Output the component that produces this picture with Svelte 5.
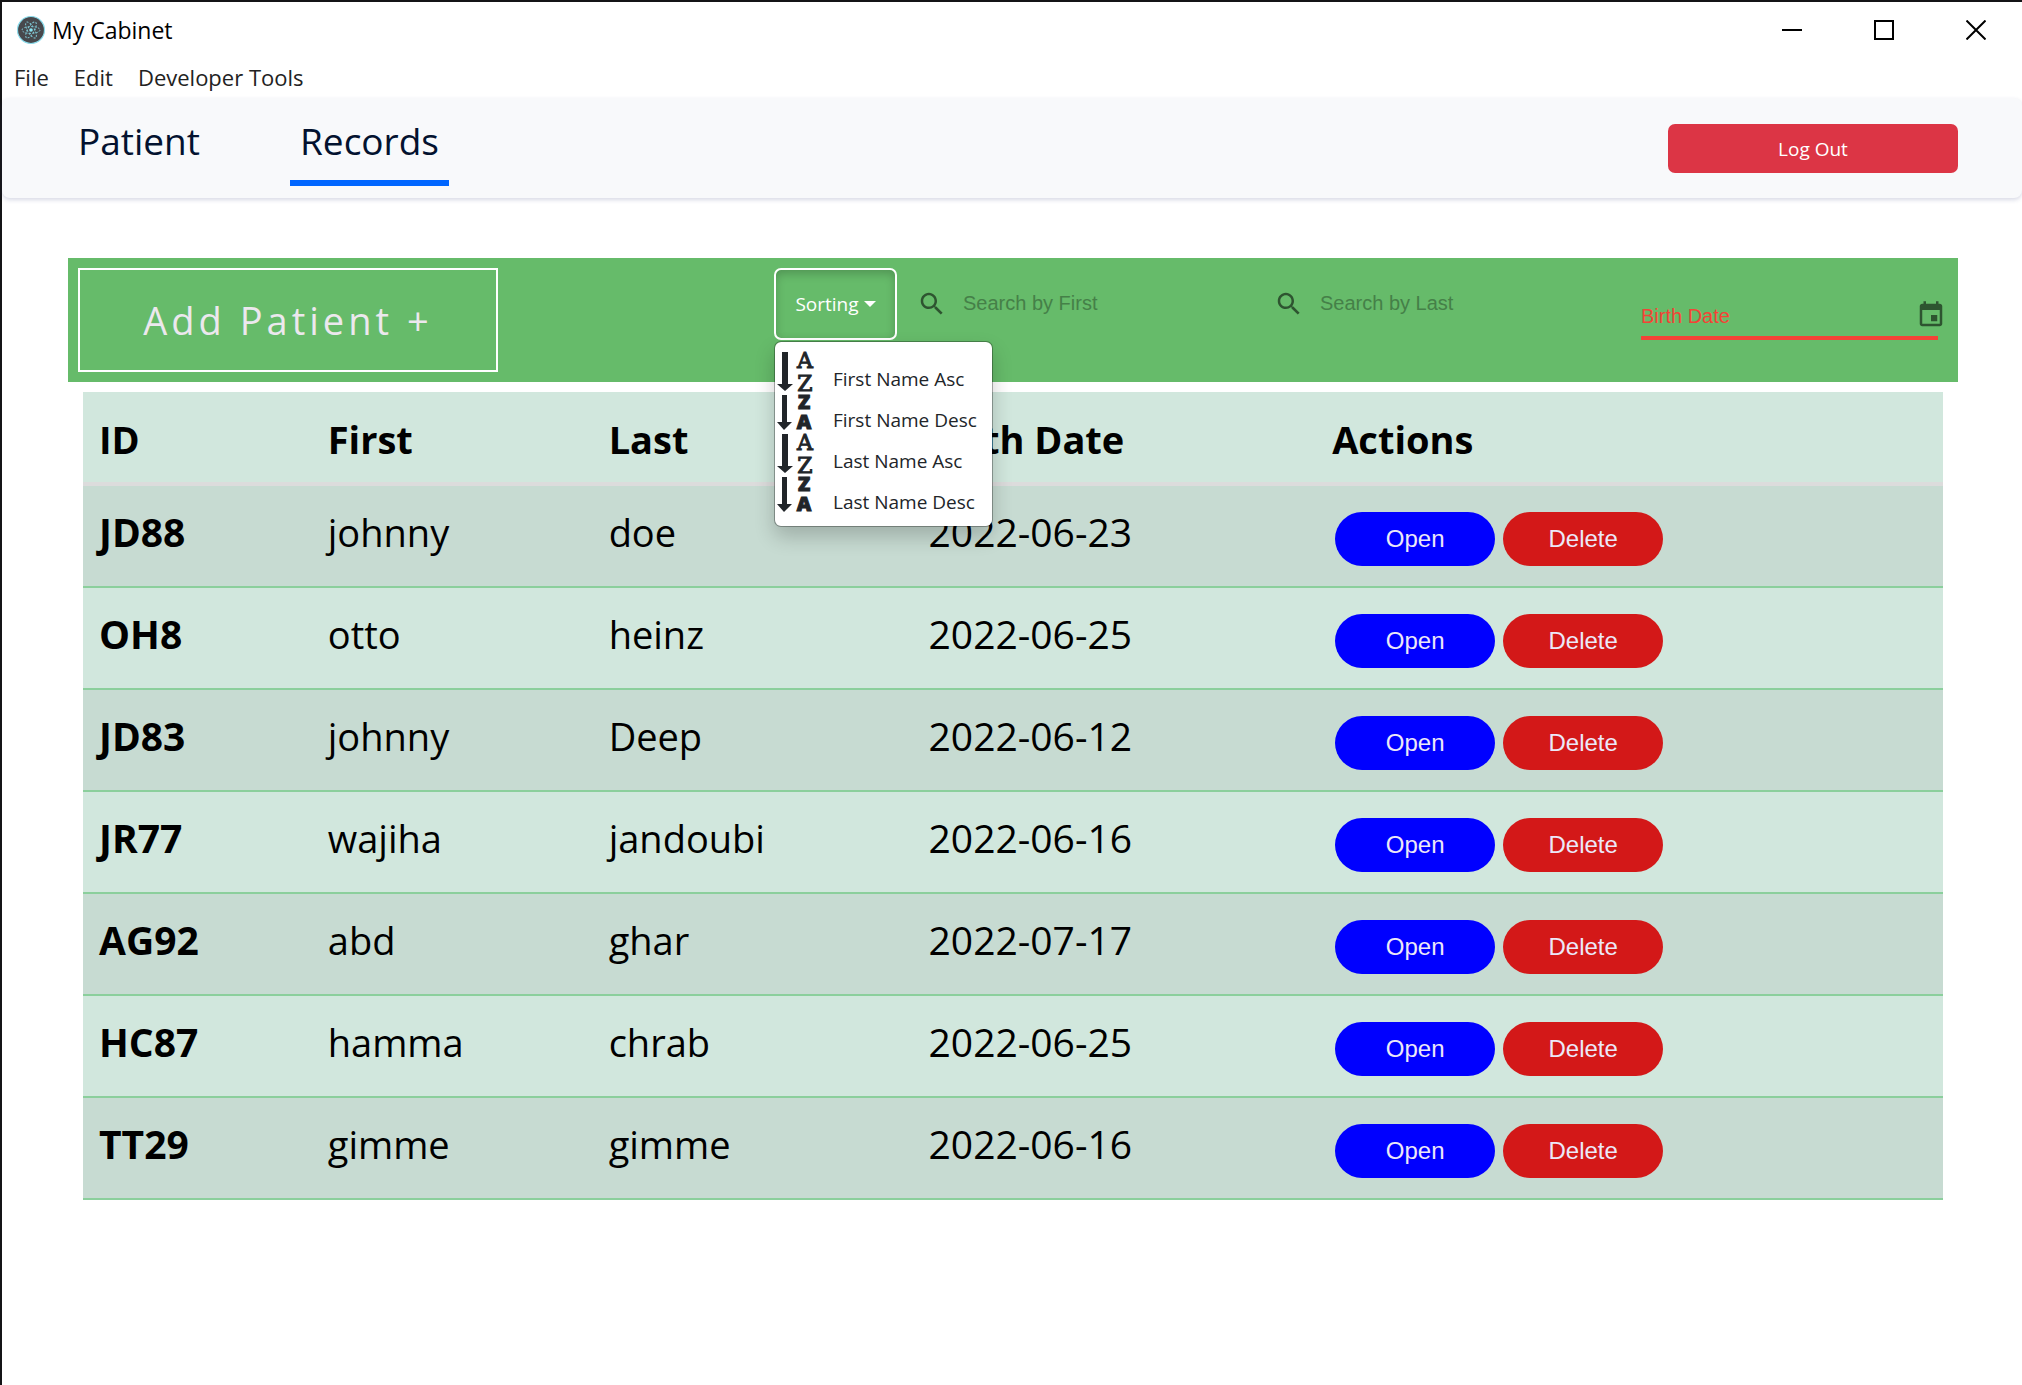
<script>
  const patients = [
    { id: 'JD88', first: 'johnny', last: 'doe', birth: '2022-06-23' },
    { id: 'OH8', first: 'otto', last: 'heinz', birth: '2022-06-25' },
    { id: 'JD83', first: 'johnny', last: 'Deep', birth: '2022-06-12' },
    { id: 'JR77', first: 'wajiha', last: 'jandoubi', birth: '2022-06-16' },
    { id: 'AG92', first: 'abd', last: 'ghar', birth: '2022-07-17' },
    { id: 'HC87', first: 'hamma', last: 'chrab', birth: '2022-06-25' },
    { id: 'TT29', first: 'gimme', last: 'gimme', birth: '2022-06-16' }
  ];
  const sorts = [
    { label: 'First Name Asc', asc: true },
    { label: 'First Name Desc', asc: false },
    { label: 'Last Name Asc', asc: true },
    { label: 'Last Name Desc', asc: false }
  ];
</script>

{#snippet searchIcon()}
  <svg class="glyph" viewBox="0 0 24 24" aria-hidden="true">
    <path d="M15.5 14h-.79l-.28-.27C15.41 12.59 16 11.11 16 9.5 16 5.91 13.09 3 9.5 3S3 5.91 3 9.5 5.91 16 9.5 16c1.61 0 3.09-.59 4.23-1.57l.27.28v.79l5 4.99L20.49 19l-4.99-5zm-6 0C7.01 14 5 11.99 5 9.5S7.01 5 9.5 5 14 7.01 14 9.5 11.99 14 9.5 14z" />
  </svg>
{/snippet}

<div class="window">
  <header class="titlebar">
    <svg class="logo" viewBox="0 0 30 30" aria-hidden="true">
      <circle cx="15" cy="15" r="13.5" fill="#47484c" stroke="#8bdcec" stroke-width="1.2" />
      <g fill="none" stroke="#7fc9d6" stroke-width="1" stroke-dasharray="2 1.4">
        <ellipse cx="15" cy="15" rx="9" ry="3.4" />
        <ellipse cx="15" cy="15" rx="9" ry="3.4" transform="rotate(60 15 15)" />
        <ellipse cx="15" cy="15" rx="9" ry="3.4" transform="rotate(120 15 15)" />
      </g>
      <circle cx="15" cy="15" r="1.8" fill="#8be4f2" />
    </svg>
    <span class="app-name">My Cabinet</span>
    <div class="controls">
      <button aria-label="Minimize"><svg viewBox="0 0 20 20"><path d="M0 10h20" /></svg></button>
      <button aria-label="Maximize"><svg viewBox="0 0 20 20"><path d="M1 1h18v18H1z" /></svg></button>
      <button aria-label="Close"><svg viewBox="0 0 20 20"><path d="M.5.5l19 19M19.5.5l-19 19" /></svg></button>
    </div>
  </header>

  <div class="menubar">
    <button>File</button>
    <button>Edit</button>
    <button>Developer Tools</button>
  </div>

  <nav class="nav">
    <a href="#patient">Patient</a>
    <a href="#records" class="active">Records</a>
    <button class="logout">Log Out</button>
  </nav>

  <main>
    <section class="toolbar">
      <button class="add">Add Patient +</button>
      <div class="dropdown">
        <button class="sorting" aria-expanded="true">Sorting<span class="caret"></span></button>
        <div class="menu">
          {#each sorts as sort}
            <button class="item">
              {#if sort.asc}
                <svg class="sort-icon" viewBox="0 0 40 41" aria-hidden="true">
                  <path d="M5 1h6v32h5l-8 7-8-7h5z" />
                  <text class="slab" x="28" y="17">A</text>
                  <text class="slab" x="28" y="40">Z</text>
                </svg>
              {:else}
                <svg class="sort-icon" viewBox="0 0 40 41" aria-hidden="true">
                  <path d="M5 3h5v27h5l-8 8-7-8h5z" />
                  <text class="heavy" x="27" y="17">Z</text>
                  <text class="heavy" x="27" y="37">A</text>
                </svg>
              {/if}
              <span class="item-label">{sort.label}</span>
            </button>
          {/each}
        </div>
      </div>
      <label class="search">
        {@render searchIcon()}
        <input type="text" placeholder="Search by First" aria-label="Search by First" />
      </label>
      <label class="search">
        {@render searchIcon()}
        <input type="text" placeholder="Search by Last" aria-label="Search by Last" />
      </label>
      <label class="date">
        <input type="text" placeholder="Birth Date" aria-label="Birth Date" />
        <svg class="glyph" viewBox="0 0 24 24" aria-hidden="true">
          <path d="M17 12h-5v5h5v-5zM16 1v2H8V1H6v2H5c-1.110 0-1.990.9-1.990 2L3 19c0 1.100.890 2 2 2h14c1.100 0 2-.9 2-2V5c0-1.100-.9-2-2-2h-1V1h-2zm3 18H5V8h14v11z" />
        </svg>
      </label>
    </section>

    <div class="records">
      <table>
        <colgroup>
          <col class="c-id" /><col class="c-first" /><col class="c-last" /><col class="c-birth" /><col />
        </colgroup>
        <thead>
          <tr><th>ID</th><th>First</th><th>Last</th><th>Birth Date</th><th>Actions</th></tr>
        </thead>
        <tbody>
          {#each patients as p}
            <tr>
              <th scope="row">{p.id}</th>
              <td>{p.first}</td>
              <td>{p.last}</td>
              <td class="birth">{p.birth}</td>
              <td>
                <div class="actions">
                  <button class="open">Open</button>
                  <button class="delete">Delete</button>
                </div>
              </td>
            </tr>
          {/each}
        </tbody>
      </table>
    </div>
  </main>
</div>

<style>
  :global(body) {
    background: #fff;
  }
  .window {
    box-sizing: border-box;
    min-height: 100vh;
    border-top: 2px solid #141416;
    border-left: 2px solid #141416;
    font-family: 'Open Sans', 'Noto Sans', sans-serif;
    color: #000;
  }
  button {
    font: inherit;
    color: inherit;
    background: none;
    border: 0;
    padding: 0;
    margin: 0;
    cursor: pointer;
  }

  .titlebar {
    display: flex;
    align-items: center;
    height: 55px;
    padding-left: 14px;
  }
  .logo {
    width: 30px;
    height: 30px;
    margin-right: 6px;
  }
  .app-name {
    font-size: 23px;
    line-height: 32px;
  }
  .controls {
    display: flex;
    margin-left: auto;
    align-self: stretch;
  }
  .controls button {
    display: flex;
    align-items: center;
    justify-content: center;
    width: 92px;
  }
  .controls svg {
    width: 20px;
    height: 20px;
    fill: none;
    stroke: #000;
    stroke-width: 2;
  }
  .menubar {
    display: flex;
    gap: 25px;
    height: 41px;
    padding-left: 12px;
    font-size: 22px;
    line-height: 40px;
    color: #222;
  }
  .menubar button {
    height: 40px;
  }

  .nav {
    display: flex;
    align-items: flex-start;
    height: 100px;
    padding: 0 64px 0 66px;
    background: #f8f9fb;
    border-radius: 8px;
    box-shadow: 0 2px 4px rgba(60, 70, 130, 0.2);
    box-sizing: border-box;
  }
  .nav a {
    padding: 16px 10px 12px;
    margin-right: 80px;
    border-bottom: 6px solid transparent;
    font-size: 37px;
    line-height: 54px;
    color: #03122f;
    text-decoration: none;
  }
  .nav a.active {
    border-color: #06f;
  }
  .logout {
    width: 290px;
    height: 49px;
    margin: 26px 0 0 auto;
    border-radius: 7px;
    background: #dc3545;
    color: #fff;
    font-size: 19px;
  }

  main {
    padding: 60px 64px 0 66px;
  }
  .toolbar {
    display: grid;
    grid-template-columns: 696fr 143fr 357fr 367fr 307fr;
    align-items: start;
    padding: 10px;
    background: #66bb6a;
  }
  .add {
    width: 420px;
    height: 104px;
    border: 2px solid #fff;
    color: #ece8ee;
    font-size: 38px;
    letter-spacing: 4px;
  }
  .dropdown {
    position: relative;
    width: 123px;
  }
  .sorting {
    display: flex;
    align-items: center;
    justify-content: center;
    gap: 5px;
    width: 100%;
    height: 72px;
    border: 2px solid #fff;
    border-radius: 7px;
    box-shadow: inset 0 4px 10px rgba(0, 0, 0, 0.2);
    color: #fff;
    font-size: 19px;
  }
  .caret {
    border: 6px solid transparent;
    border-top-color: #fff;
    border-bottom: 0;
  }
  .menu {
    position: absolute;
    top: 73px;
    left: 0;
    z-index: 2;
    padding: 9px 0 11px;
    width: 217px;
    background: #fff;
    background-clip: padding-box;
    border: 1px solid rgba(0, 0, 0, 0.3);
    border-radius: 7px;
    box-shadow: 0 10px 20px rgba(0, 0, 0, 0.2);
    color: #212529;
  }
  .item {
    display: flex;
    align-items: flex-end;
    width: 100%;
    height: 41px;
    padding-left: 2px;
    gap: 16px;
    white-space: nowrap;
  }
  .sort-icon {
    width: 40px;
    height: 41px;
    fill: #212529;
    overflow: visible;
  }
  .sort-icon text {
    text-anchor: middle;
  }
  .slab {
    font: 22px 'DejaVu Serif', serif;
    stroke: #212529;
    stroke-width: 1;
  }
  .heavy {
    font: 800 20px 'Open Sans', sans-serif;
    stroke: #212529;
    stroke-width: 1;
  }
  .item-label {
    font-size: 19px;
    line-height: 26px;
  }
  .glyph {
    flex: none;
    width: 30px;
    height: 30px;
    fill: #2e5430;
  }
  .search {
    display: flex;
    align-items: center;
    gap: 16px;
    height: 72px;
  }
  input {
    min-width: 0;
    width: 100%;
    height: 40px;
    padding: 0;
    border: 0;
    outline: 0;
    background: none;
    color: #2e5430;
    font: 20px 'Liberation Sans', Arial, sans-serif;
  }
  .search input {
    width: 260px;
    padding-bottom: 2px;
  }
  input::placeholder {
    color: #458048;
    opacity: 1;
  }
  .date {
    display: flex;
    align-items: center;
    margin: 28px 10px 0 0;
    height: 40px;
    border-bottom: 4px solid #f44336;
  }
  .date input::placeholder {
    color: #f44336;
  }
  .date .glyph {
    margin: 0 -8px 2px 0;
  }

  .records {
    padding: 10px 15px 0;
  }
  table {
    width: 100%;
    table-layout: fixed;
    border-collapse: separate;
    border-spacing: 0;
    font-size: 38px;
    line-height: 60px;
  }
  .c-id {
    width: 12.3%;
  }
  .c-first {
    width: 15.1%;
  }
  .c-last {
    width: 17.2%;
  }
  .c-birth {
    width: 21.7%;
  }
  th,
  td {
    padding: 16px 16px 24px;
    text-align: left;
    vertical-align: top;
    border-bottom: 2px solid #8bcf9c;
  }
  thead th {
    padding: 17px 16px 13px;
    border-bottom: 4px solid #dcdcdc;
    background: #d1e7dd;
  }
  tbody th,
  .birth {
    font-size: 39px;
  }
  tbody tr {
    background: #d1e7dd;
  }
  tbody tr:nth-child(odd) {
    background: #c7dbd2;
  }
  .actions {
    display: flex;
    gap: 8px;
    padding: 10px 3px 0;
    margin-bottom: -4px;
  }
  .actions button {
    width: 160px;
    height: 54px;
    border-radius: 27px;
    color: #ece8f8;
    font: 24px/54px 'Liberation Sans', Arial, sans-serif;
  }
  .open {
    background: #00f;
  }
  .delete {
    background: #d31818;
  }
</style>
